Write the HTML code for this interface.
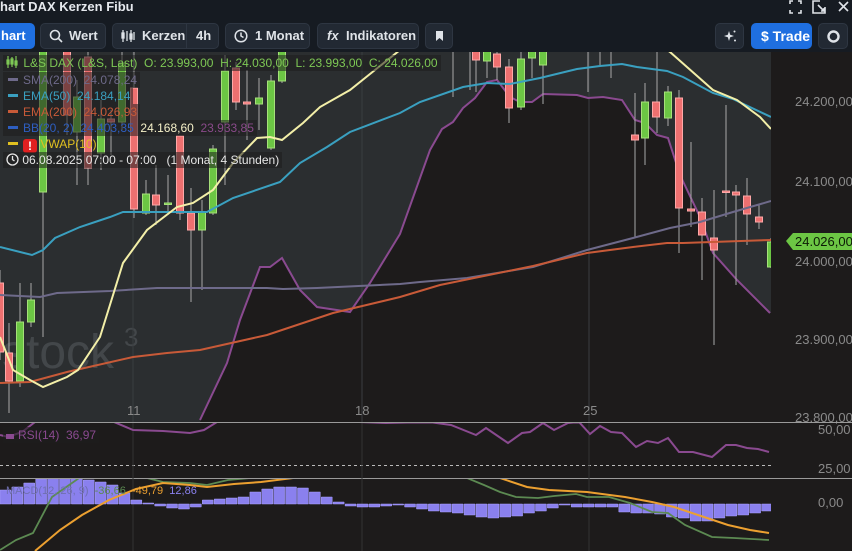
<!DOCTYPE html>
<html><head><meta charset="utf-8"><style>
*{margin:0;padding:0;box-sizing:border-box}
body{width:852px;height:551px;overflow:hidden;background:#1d1b1b;font-family:"Liberation Sans",sans-serif;position:relative}
#hdr{position:absolute;left:0;top:0;width:852px;height:52px;background:#161b22}
.t{position:absolute;color:#e6e9ee;font-size:13px;font-weight:bold;left:0;top:-1px}
.b{position:absolute;top:23px;height:26px;background:#222933;border:1px solid #2e3642;border-radius:5px;color:#dfe3e8;font-size:13px;font-weight:bold;line-height:24px;white-space:nowrap}
.blue{background:#1f6fe0;border-color:#1f6fe0;color:#fff}
.lg{position:absolute;font-size:12px;white-space:nowrap;background:rgba(30,30,30,0.55);padding:0 3px;line-height:16px}
</style></head><body>
<div id="hdr">
<div class="t">hart DAX Kerzen Fibu</div>
<svg style="position:absolute;left:788px;top:0" width="64" height="14" fill="none" stroke="#dfe3e8" stroke-width="1.6">
<path d="M2 4V1h3M10 1h3v3M13 10v3h-3M5 13H2v-3"/>
<path d="M32 1h-7v12h12V7M30 5l6 6M33 11h3V8"/>
<path d="M51 2l9 9M60 2l-9 9"/>
</svg>
<div class="b blue" style="left:-6px;width:41px;padding-left:6px">hart</div>
<div class="b" style="left:40px;width:66px;padding-left:28px"><svg style="position:absolute;left:8px;top:5px" width="14" height="14" fill="none" stroke="#dfe3e8" stroke-width="1.6"><circle cx="6" cy="6" r="4.5"/><path d="M9.5 9.5l3.5 3.5"/></svg>Wert</div>
<div class="b" style="left:112px;width:107px;padding-left:29px"><svg style="position:absolute;left:8px;top:6px" width="14" height="12" stroke="#dfe3e8" stroke-width="1.3" fill="none"><path d="M2 0v12M6 1v10M10 0v12M13 2v8"/><rect x="1" y="3" width="2" height="5"/><rect x="9" y="4" width="2" height="5"/></svg>Kerzen<span style="position:absolute;left:73px;top:0;height:24px;border-left:1px solid #2e3642;padding-left:9px">4h</span></div>
<div class="b" style="left:225px;width:85px;padding-left:29px"><svg style="position:absolute;left:8px;top:5px" width="14" height="14" fill="none" stroke="#dfe3e8" stroke-width="1.5"><circle cx="7" cy="7" r="5.8"/><path d="M7 3.5V7l2.5 1.5"/></svg>1 Monat</div>
<div class="b" style="left:317px;width:102px;padding-left:28px"><i style="position:absolute;left:9px;top:0;font-weight:bold">fx</i>Indikatoren</div>
<div class="b" style="left:425px;width:28px"><svg style="position:absolute;left:9px;top:6px" width="9" height="12"><path d="M1 1h7v10L4.5 8 1 11z" fill="#dfe3e8"/></svg></div>
<div class="b" style="left:715px;width:29px"><svg style="position:absolute;left:7px;top:5px" width="14" height="14" fill="#dfe3e8"><path d="M6 2l1.2 3.8L11 7l-3.8 1.2L6 12 4.8 8.2 1 7l3.8-1.2z"/><circle cx="11.5" cy="2.5" r="1"/><circle cx="12" cy="11.5" r="1"/></svg></div>
<div class="b blue" style="left:751px;width:61px;padding-left:9px;font-size:14px">$ Trade</div>
<div class="b" style="left:818px;width:30px"><svg style="position:absolute;left:7px;top:5px" width="15" height="15" fill="none" stroke="#dfe3e8" stroke-width="2.4"><circle cx="7.5" cy="7.5" r="5"/></svg></div>
</div>
<svg style="position:absolute;left:0;top:0" width="852" height="551">
<defs><clipPath id="cm"><rect x="0" y="52" width="771" height="370"/></clipPath>
<clipPath id="cr"><rect x="0" y="423" width="771" height="54"/></clipPath>
<clipPath id="cd"><rect x="0" y="479" width="771" height="72"/></clipPath></defs>
<rect x="0" y="52" width="852" height="499" fill="#1d1b1b"/>
<g clip-path="url(#cm)">
<path d="M0 52L771 52L771 313L770 313L737 280L713 253L700 217L680 175L668 138L657 135L645 123L635 120L622 100L603 97L588 98L577 95L543 94L532 102L520 102L510 97L497 80L487 82L475 98L463 108L453 122L442 129L430 150L400 234L370 283L350 312L317 307L300 290L282 258L270 267L260 267L240 320L227 363L200 422L0 422Z" fill="#2b2e30"/>
<text x="2" y="368" font-size="48" fill="#43474a" font-family="Liberation Sans,sans-serif">stock</text><text x="124" y="346" font-size="26" fill="#43474a">3</text>
<g stroke="#3a3d40" stroke-width="1"><path d="M133 52V422M362 52V422M589 52V422"/></g>
<path d="M200 420L227 363L240 320L260 267L270 267L282 258L300 290L317 307L350 312L370 283L400 234L430 150L442 129L453 122L463 108L475 98L487 82L497 80L510 97L520 102L532 102L543 94L577 95L588 98L603 97L622 100L635 120L645 123L657 135L668 138L680 175L700 217L713 253L737 280L770 313" fill="none" stroke="#8a4a90" stroke-width="2"/>
<g stroke="#a8a8a8" stroke-width="1">
<path d="M0 270V360M9 323V413M20 283V387M31 283V327M43 50V337M67 50V135M77 80V185M88 50V185M101 100V170M111 110V155M122 50V130M134 50V218M146 180V215M156 165V225M168 175V215M180 136V220M191 188V302M202 200V290M213 145V215M225 55V185M236 62V110M247 70V140M259 78V130M271 75V150M282 50V83M453 52V97M470 52V90M476 50V92M487 50V78M497 50V80M509 59V123M521 52V110M532 50V78M543 50V104M588 50V92M600 50V65M611 50V78M635 93V237M645 83V165M657 52V133M668 86V126M679 90V253M691 142V227M702 198V280M714 190V345M726 105V217M736 185V285M747 178V245M759 205V229M771 238V268"/>
</g>
<g fill="#6cc644" stroke="#a6e07a" stroke-width="1">
<rect x="16.5" y="322" width="7" height="59"/><rect x="27.5" y="300" width="7" height="22"/><rect x="39.5" y="50" width="7" height="142"/><rect x="73.5" y="97" width="7" height="35"/><rect x="97.5" y="119" width="7" height="34"/><rect x="118.5" y="63" width="7" height="59"/><rect x="142.5" y="194" width="7" height="19"/><rect x="198.5" y="212" width="7" height="18"/><rect x="209.5" y="149" width="7" height="64"/><rect x="221.5" y="71" width="7" height="51"/><rect x="255.5" y="98" width="7" height="6"/><rect x="267.5" y="81" width="7" height="67"/><rect x="278.5" y="50" width="7" height="31"/><rect x="483.5" y="50" width="7" height="11"/><rect x="517.5" y="59" width="7" height="48"/><rect x="528.5" y="50" width="7" height="8"/><rect x="539.5" y="50" width="7" height="15"/><rect x="641.5" y="102" width="7" height="36"/><rect x="664.5" y="92" width="7" height="26"/><rect x="767.5" y="242" width="7" height="25"/><rect x="164.5" y="203" width="7" height="1.5"/>
</g>
<g fill="#ee7070" stroke="#ffa8a8" stroke-width="1">
<rect x="-3.5" y="283" width="7" height="69"/><rect x="5.5" y="353" width="7" height="28"/><rect x="63.5" y="50" width="7" height="65"/><rect x="84.5" y="57" width="7" height="111"/><rect x="107.5" y="119" width="7" height="3"/><rect x="130.5" y="88" width="7" height="121"/><rect x="152.5" y="195" width="7" height="10"/><rect x="176.5" y="136" width="7" height="77"/><rect x="187.5" y="213" width="7" height="17"/><rect x="232.5" y="68" width="7" height="34"/><rect x="243.5" y="102" width="7" height="2"/><rect x="472.5" y="50" width="7" height="10"/><rect x="493.5" y="54" width="7" height="13"/><rect x="505.5" y="67" width="7" height="41"/><rect x="631.5" y="135" width="7" height="5"/><rect x="652.5" y="102" width="7" height="15"/><rect x="675.5" y="98" width="7" height="110"/><rect x="687.5" y="209" width="7" height="2"/><rect x="698.5" y="212" width="7" height="23"/><rect x="710.5" y="238" width="7" height="12"/><rect x="722.5" y="191" width="7" height="1.5"/><rect x="732.5" y="192" width="7" height="3"/><rect x="743.5" y="196" width="7" height="18"/><rect x="755.5" y="217" width="7" height="5"/>
</g>
<g fill="none" stroke-width="2">
<path d="M0 295L40 297L57 293L110 291L157 288L267 288L283 289L317 288L400 284L420 282L467 278L533 267L587 250L633 238L670 228L700 222L733 212L771 201" stroke="#6e6a8a"/>
<path d="M0 383L30 382L67 372L133 357L167 353L200 350L267 335L333 313L400 297L440 285L533 266L587 253L633 247L667 243L683 243L771 240" stroke="#c85a38"/>
<path d="M0 247L32 255L43 250L55 238L80 227L110 217L123 212L207 212L233 198L280 182L300 163L327 147L350 132L400 113L420 102L463 87L487 83L510 84L540 78L577 69L600 66L622 64L637 67L667 71L683 77L713 93L733 99L771 117" stroke="#3aa0c0"/>
<path d="M0 337L13 370L30 380L43 387L67 377L78 370L100 337L123 263L147 230L177 207L193 203L213 190L233 163L257 138L270 137L282 140L303 123L320 107L350 90L400 50M660 45L670 52L713 90L737 100L760 117L771 129" stroke="#f3efa8"/>
</g>
</g>
<g fill="#8a8a8a" font-size="13">
<text x="795" y="106">24.200,00</text><text x="795" y="186">24.100,00</text><text x="795" y="266">24.000,00</text><text x="795" y="344">23.900,00</text><text x="795" y="422">23.800,00</text>
<text x="127" y="415">11</text><text x="355" y="415">18</text><text x="583" y="415">25</text>
<text x="818" y="434">50,00</text><text x="818" y="473">25,00</text><text x="818" y="507">0,00</text>
</g>
<path d="M786 241L793 233H852V250H793Z" fill="#6cc644"/>
<text x="795" y="246" font-size="13" fill="#0b1a05">24.026,00</text>
<path d="M0 422.5H852M0 478.5H852" stroke="#9a9a9a" stroke-width="1"/>
<path d="M0 465.5H771" stroke="#bbb" stroke-dasharray="3,3"/>
<g stroke="#333" stroke-width="1"><path d="M133 423V551M362 423V551M589 423V551"/></g>
<g clip-path="url(#cr)">
<path d="M0 435L8 437L22 432L35 422L87 422L114 422L133 430L163 431L190 433L204 430L217 422L359 422L386 423L429 422L451 425L476 435L486 428L508 443L522 433L530 432L543 423L554 430L568 423L579 422L590 434L600 426L611 432L622 433L636 447L647 441L658 443L668 438L679 452L693 452L712 457L726 445L736 445L747 448L758 449L769 452" fill="none" stroke="#8a4a90" stroke-width="2"/>
</g>
<g clip-path="url(#cd)">
<path fill="#8a80ee" stroke="#a8a0ff" stroke-width="0.5" d="M0 504v-14h10.9v14zm11.9 0v-17h10.9v17zm11.9 0v-21h10.9v21zm11.9 0v-25h10.9v25zm11.9 0v-26h10.9v26zm11.9 0v-26h10.9v26zm11.9 0v-26h10.9v26zm11.9 0v-24h10.9v24zm11.9 0v-22h10.9v22zm11.9 0v-19h10.9v19zm11.9 0v-11h10.9v11zm11.9 0v-4h10.9v4zm11.9 0v-1h10.9v1zm11.9 0v2h10.9v-2zm11.9 0v4h10.9v-4zm11.9 0v5h10.9v-5zm11.9 0v3h10.9v-3zm11.9 0v-4h10.9v4zm11.9 0v-5h10.9v5zm11.9 0v-6h10.9v6zm11.9 0v-7h10.9v7zm11.9 0v-12h10.9v12zm11.9 0v-15h10.9v15zm11.9 0v-17h10.9v17zm11.9 0v-17h10.9v17zm11.9 0v-16h10.9v16zm11.9 0v-12h10.9v12zm11.9 0v-7h10.9v7zm11.9 0v-2h10.9v2zm11.9 0v2h10.9v-2zm11.9 0v3h10.9v-3zm11.9 0v3h10.9v-3zm11.9 0v2h10.9v-2zm11.9 0v1h10.9v-1zm11.9 0v3h10.9v-3zm11.9 0v5h10.9v-5zm11.9 0v7h10.9v-7zm11.9 0v8h10.9v-8zm11.9 0v9h10.9v-9zm11.9 0v11h10.9v-11zm11.9 0v13h10.9v-13zm11.9 0v14h10.9v-14zm11.9 0v13h10.9v-13zm11.9 0v12h10.9v-12zm11.9 0v9h10.9v-9zm11.9 0v7h10.9v-7zm11.9 0v4h10.9v-4zm11.9 0v1h10.9v-1zm11.9 0v3h10.9v-3zm11.9 0v3h10.9v-3zm11.9 0v3h10.9v-3zm11.9 0v3h10.9v-3zm11.9 0v8h10.9v-8zm11.9 0v9h10.9v-9zm11.9 0v9h10.9v-9zm11.9 0v10h10.9v-10zm11.9 0v13h10.9v-13zm11.9 0v14h10.9v-14zm11.9 0v17h10.9v-17zm11.9 0v17h10.9v-17zm11.9 0v14h10.9v-14zm11.9 0v12h10.9v-12zm11.9 0v11h10.9v-11zm11.9 0v9h10.9v-9zm11.9 0v7h10.9v-7z"/>
<path d="M0 550L16 540L33 533L52 497L82 476L100 470L130 472L147 478L163 482L190 483L207 485L228 480L250 478L270 474M450 474L467 478L484 485L500 492L516 497L538 498L554 496L576 494L587 497L609 497L630 503L652 512L668 513L685 525L712 537L734 538L769 540" fill="none" stroke="#5c8a52" stroke-width="1.8"/>
<path d="M35 551L60 530L82 515L109 500L136 489L163 483L190 485L207 487L234 484L261 482L293 478L310 474M480 472L500 478L527 487L549 490L587 492L625 497L652 502L674 507L707 518L728 525L750 530L769 533" fill="none" stroke="#eca030" stroke-width="2"/>
</g>
</svg>
<div class="lg" style="left:3px;top:55px;color:#7ec855"><svg width="14" height="12" style="vertical-align:-1px" stroke="#7ec855" fill="none" stroke-width="1.2"><path d="M2 0v12M6 1v10M10 0v12"/><rect x="1" y="4" width="2" height="4"/><rect x="5" y="3" width="2" height="5"/><rect x="9" y="5" width="2" height="4"/></svg> L&amp;S DAX (L&amp;S, Last)&nbsp; O: 23.993,00&nbsp; H: 24.030,00&nbsp; L: 23.993,00&nbsp; C: 24.026,00</div>
<div class="lg" style="left:3px;top:72px;color:#6e6a8a"><b style="display:inline-block;width:10px;height:3px;background:#6e6a8a;vertical-align:3px;margin:0 5px 0 2px"></b>SMA(200)&nbsp; 24.078,24</div>
<div class="lg" style="left:3px;top:88px;color:#3aa0c0"><b style="display:inline-block;width:10px;height:3px;background:#3aa0c0;vertical-align:3px;margin:0 5px 0 2px"></b>EMA(50)&nbsp; 24.184,14</div>
<div class="lg" style="left:3px;top:104px;color:#c85a38"><b style="display:inline-block;width:10px;height:3px;background:#c85a38;vertical-align:3px;margin:0 5px 0 2px"></b>EMA(200)&nbsp; 24.026,93</div>
<div class="lg" style="left:3px;top:120px;color:#2e5ec0"><b style="display:inline-block;width:10px;height:3px;background:#2e5ec0;vertical-align:3px;margin:0 5px 0 2px"></b>BB(20, 2)&nbsp; 24.403,35&nbsp; <span style="color:#f5f0c8">24.168,60</span>&nbsp; <span style="color:#8a4a8a">23.933,85</span></div>
<div class="lg" style="left:3px;top:136px;color:#e0c020;background:none"><b style="display:inline-block;width:10px;height:3px;background:#e0c020;vertical-align:3px;margin:0 5px 0 2px"></b><span style="display:inline-block;width:14px;height:14px;background:#e02020;border-radius:3px;color:#fff;text-align:center;font-weight:bold;line-height:14px;vertical-align:-2px">!</span> VWAP(10)</div>
<div class="lg" style="left:3px;top:152px;color:#e6e6e6"><svg width="13" height="13" style="vertical-align:-2px" fill="none" stroke="#e6e6e6" stroke-width="1.3"><circle cx="6.5" cy="6.5" r="5.5"/><path d="M6.5 3v3.5l2 1.5"/></svg> 06.08.2025 07:00 - 07:00&nbsp;&nbsp; (1 Monat, 4 Stunden)</div>
<div class="lg" style="left:3px;top:427px;color:#8a4a90;background:rgba(30,30,30,0.6)"><b style="display:inline-block;width:8px;height:5px;background:#8a4a90;margin-right:4px"></b>RSI(14)&nbsp; 36,97</div>
<div class="lg" style="left:3px;top:483px;color:#6f6fb0;background:none;font-size:11px">MACD(12, 26, 9)&nbsp; <span style="color:#5c8a52">-36,66</span>&nbsp; <span style="color:#eca030">-49,79</span>&nbsp; <span style="color:#8a80ee">12,86</span></div>
</body></html>
